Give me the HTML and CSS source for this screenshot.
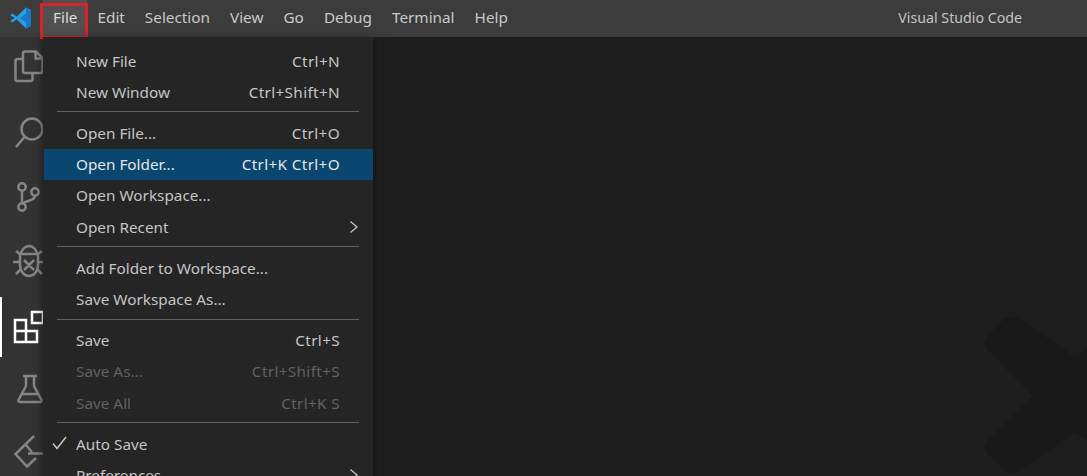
FILE: index.html
```html
<!DOCTYPE html>
<html lang="en">
<head>
<meta charset="utf-8">
<title>Visual Studio Code</title>
<link rel="stylesheet" href="styles.css">
</head>
<body>
<div class="window">
  <header class="titlebar">
    <div class="logo">
      <svg width="24" height="24" viewBox="0 0 24 24"><path class="logo-l" d="M17 1.500 7.600 10.800 3.600 7.600 1 9l4.600 3L1 15l2.600 1.400 4-3.200 9.400 9.300 5-2.400V3.900z"/><path class="logo-d" d="M17 1.500 22 3.900v16.200l-5 2.400zM17 7.500 10.800 12 17 16.500z"/></svg>
    </div>
    <nav class="menubar">
      <span class="top top-open">File</span>
      <span class="top">Edit</span>
      <span class="top">Selection</span>
      <span class="top">View</span>
      <span class="top">Go</span>
      <span class="top">Debug</span>
      <span class="top">Terminal</span>
      <span class="top">Help</span>
    </nav>
    <div class="title">Visual Studio Code</div>
  </header>
  <div class="body">
    <aside class="activity">
      <div class="act act-files"><svg width="30" height="34" viewBox="0 0 30 34"><path d="M9 9H3.500A2 2 0 0 0 1.500 11v18a2 2 0 0 0 2 2h13a2 2 0 0 0 2-2v-6"/><path d="M9 3.500a2 2 0 0 1 2-2h11l6.500 6.500v13a2 2 0 0 1-2 2H11a2 2 0 0 1-2-2z"/><path d="M21.500 1.500v7h7"/></svg></div>
      <div class="act act-search"><svg width="30" height="34" viewBox="0 0 30 34"><circle cx="18" cy="12" r="10.500"/><path d="M10.500 20 2 30"/></svg></div>
      <div class="act act-git"><svg width="30" height="34" viewBox="0 0 30 34"><circle cx="8" cy="5" r="3.700"/><circle cx="8" cy="25" r="3.700"/><circle cx="21" cy="10" r="3.700"/><path d="M8 9v12M21 14c0 5-9 4-13 8"/></svg></div>
      <div class="act act-bug"><svg width="32" height="36" viewBox="0 0 32 36"><path d="M7 13c1-6 5-10 9-10s8 4 9 10v9c0 6-4 11-9 11s-9-5-9-11z"/><path d="M8 11h16M11 17l10 10M21 17 11 27M7 19H0M25 19h7M8 12 3 8M24 12l5-4M8 26l-5 5M24 26l5 5"/></svg></div>
      <div class="act act-ext act-on"><svg width="32" height="34" viewBox="0 0 32 34"><path d="M3 10h11v11H3zM3 21h11v11H3zM14 21h11v11H14z"/><path d="M20 2h11v11H20z"/></svg></div>
      <div class="act act-flask"><svg width="30" height="30" viewBox="0 0 30 30"><path d="M8 2h14M11 2v10L3.500 26a1.500 1.500 0 0 0 1.500 2h20a1.500 1.500 0 0 0 1.500-2L19 12V2M7 20h16"/></svg></div>
      <div class="act act-remote"><svg width="30" height="34" viewBox="0 0 30 34"><path d="M20 2 1.500 20 13 32.500 22 24"/><path d="M11 10l7 8M14 19.500h16"/></svg></div>
    </aside>
    <main class="editor">
      <svg class="watermark" width="103" height="160" viewBox="0 0 103 160"><path d="M3 21Q-2 26 3 33L49 80 3 125Q-2 131 3 137L20 154Q27 160 35 155L90 117 103 124V34L91 41 35 3Q27-2 20 3z"/></svg>
    </main>
  </div>
  <section class="menu">
    <div class="row"><span>New File</span><span class="keys">Ctrl+N</span></div>
    <div class="row"><span>New Window</span><span class="keys">Ctrl+Shift+N</span></div>
    <div class="sep"></div>
    <div class="row"><span>Open File...</span><span class="keys">Ctrl+O</span></div>
    <div class="row row-active"><span>Open Folder...</span><span class="keys">Ctrl+K Ctrl+O</span></div>
    <div class="row"><span>Open Workspace...</span></div>
    <div class="row"><span>Open Recent</span><svg class="chev" width="10" height="14" viewBox="0 0 10 14"><path d="M1.500 1.500 8 7l-6.500 5.500"/></svg></div>
    <div class="sep"></div>
    <div class="row"><span>Add Folder to Workspace...</span></div>
    <div class="row"><span>Save Workspace As...</span></div>
    <div class="sep"></div>
    <div class="row"><span>Save</span><span class="keys">Ctrl+S</span></div>
    <div class="row row-off"><span>Save As...</span><span class="keys">Ctrl+Shift+S</span></div>
    <div class="row row-off"><span>Save All</span><span class="keys">Ctrl+K S</span></div>
    <div class="sep"></div>
    <div class="row"><svg class="check" width="15" height="14" viewBox="0 0 15 14"><path d="M1 7.500 5 12.500 14 1"/></svg><span>Auto Save</span></div>
    <div class="row"><span>Preferences</span><svg class="chev" width="10" height="14" viewBox="0 0 10 14"><path d="M1.500 1.500 8 7l-6.500 5.500"/></svg></div>
  </section>
</div>
</body>
</html>
```
FILE: styles.css
```css
* { box-sizing: border-box; }
html, body { margin: 0; height: 100%; overflow: hidden; background: #1e1e1e; }
body { font-family: "Noto Sans", "Open Sans", sans-serif; font-size: 15.300px; color: #ccc; }
.window { position: relative; width: 1087px; height: 476px; display: flex; flex-direction: column; overflow: hidden; }

.titlebar { height: 37px; flex: none; display: flex; align-items: center; background: #3c3c3c; }
.logo { width: 43px; height: 37px; padding: 6px 0 0 9px; flex: none; }
.logo-l { fill: #2a9ee4; }
.logo-d { fill: #1878c4; }
.menubar { display: flex; align-self: stretch; }
.top { padding: 0 10px; line-height: 35px; color: #c9c9c9; }
.top-open { position: relative; background: #505050; color: #dcdcdc; }
.top-open::after { content: ""; position: absolute; left: -3px; right: -1px; top: 3px; bottom: -2px; border: 3px solid #d9222a; }
.title { margin-left: auto; margin-right: 65px; padding-bottom: 2px; font-size: 14.200px; color: #c4c4c4; }

.body { flex: 1; display: flex; min-height: 0; }
.activity { width: 43px; flex: none; background: #333; display: flex; flex-direction: column; padding-top: 13px; }
.act { height: 62px; flex: none; padding-left: 14px; }
.act svg { display: block; fill: none; stroke: #858585; stroke-width: 2.500; }
.act-on { position: relative; height: 62px; margin-top: 0; }
.act-on::before { content: ""; position: absolute; left: 0; top: -1px; width: 2px; height: 60px; background: #fff; }
.act-on svg { stroke: #fff; }
.act-search { padding-top: 5px; }
.act-git { padding-top: 8px; padding-left: 14px; }
.act-bug { padding-top: 7px; padding-left: 13px; }
.act-ext { padding-top: 12px; padding-left: 12px; }
.act-flask { padding-top: 14px; padding-left: 15px; }
.act-remote { padding-top: 12px; }

.editor { flex: 1; display: flex; justify-content: flex-end; align-items: flex-end; background: #1e1e1e; }
.watermark { display: block; flex: none; }
.watermark path { fill: #191919; }

.menu { position: absolute; left: 43px; top: 37px; width: 330px; padding-top: 8.600px; background: #252526; box-shadow: 0 2px 8px rgba(0, 0, 0, .55); }
.row { position: relative; height: 31.200px; padding: 0 33px 1px; display: flex; align-items: center; justify-content: space-between; color: #c4c4c4; white-space: nowrap; }
.keys { letter-spacing: .35px; }
.row-active { margin-left: 1px; padding-left: 32px; background: #094771; color: #e4e4e4; }
.row-off { color: #616161; }
.sep { height: 10px; padding: 3.500px 14px 0; }
.sep::before { content: ""; display: block; height: 1px; background: #606060; }
.chev { position: absolute; right: 14px; top: 8px; fill: none; stroke: #c4c4c4; stroke-width: 1.300; }
.check { position: absolute; left: 9px; top: 7px; fill: none; stroke: #c4c4c4; stroke-width: 1.500; }
```
